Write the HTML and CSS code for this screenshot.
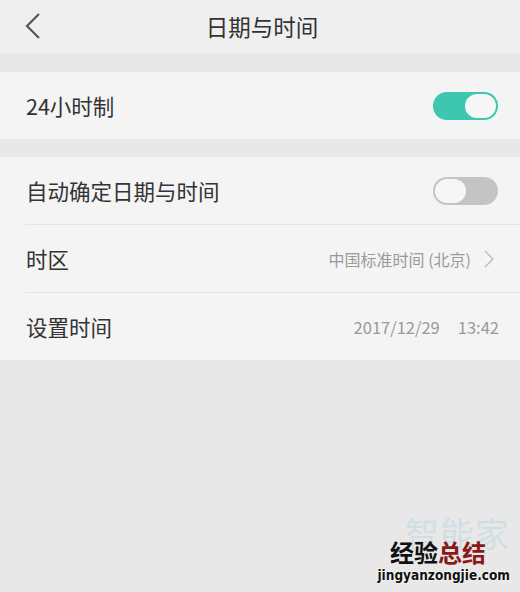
FILE: index.html
```html
<!DOCTYPE html>
<html lang="zh-CN">
<head>
  <meta charset="UTF-8" />
  <meta name="viewport" content="width=device-width, initial-scale=1" />
  <title>日期与时间</title>
  <link rel="stylesheet" href="styles.css">
</head>
<body>

<header class="topbar">
  <svg class="back" width="18" height="28" viewBox="0 0 18 28">
    <path d="M15 2 L3 14 L15 26" fill="none" stroke="#555" stroke-width="2.2" />
  </svg>
  <h1>日期与时间</h1>
</header>

<section class="group">
  <div class="row">
    <span class="label">24小时制</span>
    <span class="switch on"><span class="knob"></span></span>
  </div>
</section>

<section class="group">
  <div class="row">
    <span class="label">自动确定日期与时间</span>
    <span class="switch"><span class="knob"></span></span>
  </div>
  <div class="row">
    <span class="label">时区</span>
    <span class="value zone">中国标准时间 (北京)
      <svg class="chev" width="10" height="18" viewBox="0 0 10 18">
        <path d="M1 1 L9 9 L1 17" fill="none" stroke="#bbb" stroke-width="1.4" />
      </svg>
    </span>
  </div>
  <div class="row">
    <span class="label">设置时间</span>
    <span class="value date">2017/12/29<span class="sp"></span>13:42</span>
  </div>
</section>

<div class="watermark">
  <div class="wm-back">智能家</div>
  <div class="wm-front">经验<em>总结</em></div>
  <div class="wm-url">jingyanzongjie.com</div>
</div>

</body>
</html>
```

FILE: styles.css
```css
html, body {
  margin: 0; padding: 0;
  height: 100%;
}
body {
  background: #e8e8e8;
  font-family: "Noto Sans CJK SC", "Noto Sans", sans-serif;
  color: #333;
  position: relative;
  overflow: hidden;
}
.topbar {
  height: 54px;
  background: #efefef;
  display: flex;
  align-items: center;
  justify-content: center;
  position: relative;
}
.topbar h1 {
  margin: 0 0 3px;
  font-size: 22.5px;
  font-weight: 400;
  color: #333;
  padding-left: 4px;
}
.back {
  position: absolute;
  left: 24px;
  top: 12px;
}
.group {
  margin-top: 18px;
  background: #f4f4f4;
}
.row {
  height: 67px;
  display: flex;
  align-items: center;
  justify-content: space-between;
  padding: 0 22px 0 26px;
  position: relative;
}
.row + .row {
  border-top: 1px solid #e4e4e4;
  margin-left: 25px;
  padding-left: 1px;
}
.label {
  font-size: 21.5px;
  color: #333;
}
.switch {
  width: 65px;
  height: 28px;
  border-radius: 14px;
  background: #c4c4c4;
  position: relative;
}
.switch .knob {
  position: absolute;
  top: 2px;
  left: 2px;
  width: 31px;
  height: 24px;
  border-radius: 12px;
  background: #f6f6f6;
}
.switch.on {
  background: #3cc7ae;
}
.switch.on .knob {
  left: auto;
  right: 2px;
  background: #f7f7f7;
}
.value {
  color: #9a9a9a;
  display: flex;
  align-items: center;
}
.zone {
  font-size: 16px;
  margin-right: 4px;
}
.chev {
  margin-left: 13px;
}
.date {
  font-size: 16.5px;
  margin-right: -1px;
}
.sp {
  display: inline-block;
  width: 18px;
}
.watermark {
  position: absolute;
  right: 10px;
  bottom: 8px;
  text-align: right;
}
.wm-back {
  position: absolute;
  right: 0;
  top: -30px;
  font-size: 34px;
  color: #d3dee4;
  letter-spacing: 1px;
}
.wm-front {
  position: relative;
  font-size: 24px;
  font-weight: 700;
  color: #111;
  line-height: 28px;
  margin-right: 24px;
}
.wm-front em {
  font-style: normal;
  color: #8a1a1a;
}
.wm-url {
  position: relative;
  font-family: "DejaVu Sans Condensed", "DejaVu Sans", sans-serif;
  font-weight: 700;
  font-size: 13.5px;
  color: #111;
  line-height: 18px;
  text-shadow: 0 0 2px #fff, 0 0 2px #fff;
}
```
